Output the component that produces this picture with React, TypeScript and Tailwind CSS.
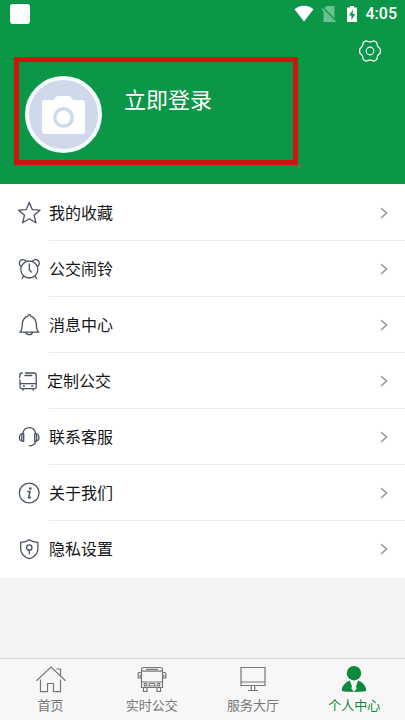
import { useState } from "react";
import type { ReactNode } from "react";

interface MenuItem {
  label: string;
  icon: ReactNode;
  tight?: boolean;
}

interface TabItem {
  label: string;
  icon: ReactNode;
}

const lineIcon = {
  width: 24,
  height: 24,
  viewBox: "0 0 24 24",
  fill: "none",
  stroke: "currentColor",
  strokeWidth: 1.3,
  strokeLinejoin: "round" as const,
  strokeLinecap: "round" as const,
  "aria-hidden": true,
};

const tabIcon = {
  width: 32,
  height: 28,
  viewBox: "0 0 32 28",
  fill: "none",
  stroke: "currentColor",
  strokeWidth: 1.2,
  "aria-hidden": true,
};

const menuItems: MenuItem[] = [
  {
    label: "我的收藏",
    icon: (
      <svg {...lineIcon}>
        <path d="M12.300 1.400l3 7.200 7.700.6-5.900 5 1.900 7.600-6.700-4.100-6.700 4.100 1.900-7.600-5.900-5 7.700-.6z" />
      </svg>
    ),
  },
  {
    label: "公交闹铃",
    icon: (
      <svg {...lineIcon}>
        <circle cx="12.300" cy="12.500" r="8.500" />
        <path d="M3.700 9.200C2 7.800 1.900 5.200 3.300 3.700s4.200-1.500 5.500.3M20.900 9.200c1.700-1.400 1.800-4 .4-5.500s-4.200-1.500-5.500.3" />
        <path d="M12.300 7v5.800l2 2.200M6.500 19.200l-1.400 2.300M18.100 19.200l1.400 2.300" />
      </svg>
    ),
  },
  {
    label: "消息中心",
    icon: (
      <svg {...lineIcon}>
        <path d="M2.800 19.200c2-1.600 2.400-3.500 2.400-7.200 0-4.500 2.500-8.200 5.700-8.900a1.400 1.400 0 0 1 2.800 0c3.200.7 5.700 4.400 5.700 8.900 0 3.700.4 5.600 2.400 7.200z" />
        <path d="M9.200 19.300c.4 3.200 5.800 3.200 6.200 0" />
      </svg>
    ),
  },
  {
    label: "定制公交",
    tight: true,
    icon: (
      <svg {...lineIcon}>
        <path d="M2.800 8.500V6.500Q2.800 4 5.300 4M3 11v7q0 1.700 1.700 1.700h12.800q1.700 0 1.700-1.700V6.300Q19.200 4 17 4H8.500M3 14.600h16.200M8 6.500h6.800M6.300 17h1.200M14.700 17h1.200M6 19.700v1.600M16.200 19.700v1.600" />
      </svg>
    ),
  },
  {
    label: "联系客服",
    icon: (
      <svg {...lineIcon}>
        <path d="M5.700 8.300C6.600 4.800 9 2.700 12.200 2.700s5.600 2.100 6.500 5.600" />
        <path d="M6.700 8.700v7.600c-2.900.2-4.300-1.400-4.300-3.800s1.400-4 4.300-3.800zM17.700 8.700v7.600c2.900.2 4.300-1.400 4.300-3.800s-1.400-4-4.300-3.800z" />
        <path d="M4.800 9.500v6M19.600 9.500v6M18.700 16.500c-1 2.800-3.200 4.300-6.500 4.300" />
      </svg>
    ),
  },
  {
    label: "关于我们",
    icon: (
      <svg {...lineIcon}>
        <circle cx="12.200" cy="12" r="9.900" />
        <path d="M10.800 10.400h2.300l-1.500 6q-.2.900.8.500l1-.6" strokeWidth="1.500" />
        <circle cx="13.300" cy="7.500" r=".7" fill="currentColor" />
      </svg>
    ),
  },
  {
    label: "隐私设置",
    icon: (
      <svg {...lineIcon}>
        <path d="M12.300 2.700c2.500 1.800 5.200 2.500 8.600 2.600V12c0 4.700-3.400 8-8.600 9.700-5.200-1.700-8.600-5-8.600-9.700V5.300c3.400-.1 6.100-.8 8.600-2.600z" />
        <circle cx="12.300" cy="10.500" r="2.700" />
        <path d="M12.300 13.200v3.500" />
      </svg>
    ),
  },
];

const tabs: TabItem[] = [
  {
    label: "首页",
    icon: (
      <svg {...tabIcon}>
        <path d="M1.500 15.800L16 2l14.500 13.800M5.500 14.500v12.200h7v-8.200h6v8.200h7V14.500M21.300 4h4.200v6.500" />
      </svg>
    ),
  },
  {
    label: "实时公交",
    icon: (
      <svg {...tabIcon}>
        <path d="M5.500 22.500V4.500q0-2 2-2h17q2 0 2 2v18zM5.500 6.200h21M5.500 17h21M10 4.300h12" />
        <path d="M5.500 7.500H3.200q-1 0-1 1V13h2V9.500M26.500 7.500h2.300q1 0 1 1V13h-2V9.500" />
        <path d="M7.500 22.500v4h3.500v-4M21 22.500v4h3.500v-4" />
        <circle cx="9.500" cy="19.800" r="1.400" />
        <circle cx="22.500" cy="19.800" r="1.400" />
        <path d="M14 18.500h4l1.300 2.500h-6.600z" />
      </svg>
    ),
  },
  {
    label: "服务大厅",
    icon: (
      <svg {...tabIcon}>
        <path d="M4 2.500h24v18H4zM4 17h24M14.300 20.500v4.700M17.700 20.500v4.700M11 25.500h10" />
      </svg>
    ),
  },
  {
    label: "个人中心",
    icon: (
      <svg {...tabIcon} fill="currentColor" stroke="none">
        <circle cx="16" cy="8.200" r="7.200" />
        <path d="M11.800 15.500L16 26.800l4.200-11.300c4.300 1.800 7.600 5 8 9.300.1 1-1 1.600-2.200 1.700q-10 .9-20 0c-1.200-.1-2.300-.7-2.200-1.700.4-4.300 3.700-7.500 8-9.300z" />
        <path d="M14.500 16.500h3l-.6 2 1.900 4.800L16 27l-2.800-3.700 1.900-4.800z" fill="#f7f7f7" />
      </svg>
    ),
  },
];

function StatusBar() {
  return (
    <div className="flex h-7 items-center pr-2 pl-[10px]">
      <span className="size-5 rounded-[3px] bg-white" />
      <div className="ml-auto flex items-center">
        <svg width="20" height="18" viewBox="0 0 20 18" fill="currentColor" aria-hidden="true">
          <path d="M.5 4.200C6-.4 14-.4 19.500 4.200L10 16.500z" />
        </svg>
        <svg className="ml-2 opacity-40" width="14" height="18" viewBox="0 0 14 18" aria-hidden="true">
          <path d="M4.500 1H12.500v16H1.500V4z" fill="currentColor" />
          <path d="M0 2.500l13.500 13.500" stroke="#0c9647" strokeWidth="2.500" />
          <path d="M0 3.500l13.500 13.500" stroke="currentColor" strokeWidth="1.500" />
        </svg>
        <svg className="ml-[10px]" width="12" height="18" viewBox="0 0 12 18" aria-hidden="true">
          <path d="M4 1h4v1.500h2.500q.5 0 .5.500v13.500q0 .5-.5.500h-9q-.5 0-.5-.5V3q0-.5.500-.5H4z" fill="currentColor" />
          <path d="M7 4.500L3 10.500h2.500V15l3.700-6H6.700z" fill="#0c9647" />
        </svg>
        <span className="ml-2 font-[Roboto,sans-serif] text-base leading-5 font-medium">4:05</span>
      </div>
    </div>
  );
}

export default function App() {
  const [activeTab, setActiveTab] = useState("个人中心");

  return (
    <div className="flex min-h-screen flex-col bg-[#f4f4f4] font-['Noto_Sans_CJK_SC',sans-serif]">
      <header className="bg-[#0c9647] pb-[19px] text-white">
        <StatusBar />
        <div className="flex items-start pt-3 pr-6 pl-[14px]">
          <button
            type="button"
            className="mt-[17px] flex flex-1 items-start gap-[22px] border-[5px] border-[#d1150d] pt-[14px] pb-[7px] pl-[6px] text-left"
          >
            <span className="flex size-[77px] shrink-0 items-center justify-center rounded-full border-4 border-[#f4fdfa] bg-[#cfd9e9]">
              <svg width="45" height="41" viewBox="0 0 45 41" aria-hidden="true">
                <path
                  d="M4 6h8c2 0 2.500-4 5-4h11c2.500 0 3 4 5 4h8q3 0 3 3v28q0 3-3 3H4q-3 0-3-3V9q0-3 3-3z"
                  fill="#fff"
                />
                <circle cx="22.500" cy="23.500" r="8.700" fill="#fff" stroke="#cfd9e9" strokeWidth="3.500" />
              </svg>
            </span>
            <span className="mt-2 text-[22px] leading-7">立即登录</span>
          </button>
          <button type="button" aria-label="设置" className="ml-[61px]">
            <svg width="22" height="22" viewBox="0 0 22 22" fill="none" stroke="currentColor" strokeWidth="1.200" strokeLinejoin="round" aria-hidden="true">
              <path d="M7 .8Q11 3 15 .8q1.800.8 3 2.200c-.2 3 .8 4.300 3 5.500q.6 2.500 0 5c-2.200 1.200-3.200 2.500-3 5.500q-1.200 1.400-3 2.200-4-2.200-8 0-1.800-.8-3-2.200c.2-3-.8-4.300-3-5.500q-.6-2.500 0-5C3.200 7.300 4.200 6 4 3Q5.200 1.600 7 .8z" />
              <circle cx="11" cy="11" r="3.800" />
            </svg>
          </button>
        </div>
      </header>

      <nav className="bg-white py-px">
        {menuItems.map((item, index) => (
          <button key={item.label} type="button" className="flex h-14 w-full items-center pl-[17px] text-[#495162]">
            {item.icon}
            <span
              className={`ml-2 flex h-full flex-1 items-center justify-between pr-4 ${index < menuItems.length - 1 ? "border-b border-[#ececec]" : ""}`}
            >
              <span className={`pb-0.5 text-base text-[#161616] ${item.tight ? "-ml-0.5" : ""}`}>{item.label}</span>
              <svg className="text-[#999]" width="10" height="12" viewBox="0 0 10 12" fill="none" stroke="currentColor" strokeWidth="1.600" aria-hidden="true">
                <path d="M2 1l5.500 5L2 11" />
              </svg>
            </span>
          </button>
        ))}
      </nav>

      <footer className="mt-auto flex border-t border-[#d9d9d9] bg-[#f7f7f7] pt-[6px]">
        {tabs.map((tab) => (
          <button
            key={tab.label}
            type="button"
            onClick={() => setActiveTab(tab.label)}
            className={`flex flex-1 flex-col items-center pb-[5px] ${activeTab === tab.label ? "text-[#0b8a3c]" : "text-[#777]"}`}
          >
            {tab.icon}
            <span className="mt-0.5 text-[13px] leading-5">{tab.label}</span>
          </button>
        ))}
      </footer>
    </div>
  );
}
